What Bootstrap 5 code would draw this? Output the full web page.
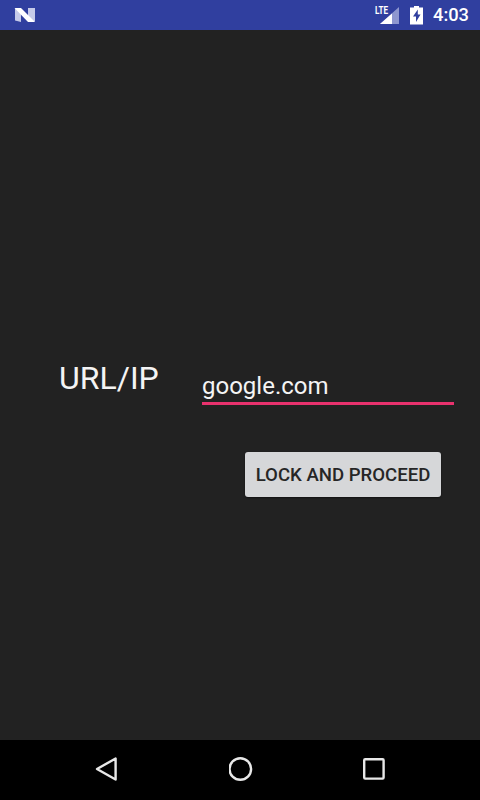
<!DOCTYPE html>
<html><head><meta charset="utf-8">
<link href="https://cdn.jsdelivr.net/npm/bootstrap@5.3.0/dist/css/bootstrap.min.css" rel="stylesheet">
<style>
html,body{height:800px;margin:0;overflow:hidden;background:#222;font-family:Roboto,sans-serif}
.shell{height:800px}
.statusbar{height:30px;background:#303f9f;color:#fff;padding:0 11px 0 14px}
.clock{font-size:18.3px;font-weight:500;line-height:30px;margin-left:10px}
.batt{margin-left:10px}
.content{height:710px;background:#222;padding-top:335px}
.formrow{height:80px}
.urlbl{font-size:32px;font-weight:400;line-height:36px;color:#f4f4f4;margin-left:59px;width:143px;margin-top:-5px}
.fieldwrap{width:252px;height:42px;margin-top:1px}
.fieldtxt{font-size:24px;line-height:30px;color:#f4f4f4;display:block;height:36px;padding-top:5px}
.fieldline{height:3px;background:#e9326e}
.actrow{padding-left:245px;margin-top:-4px;padding-top:11px}
.lockbtn{width:196px;height:45px;padding:1px 0 0;background:#d6d7d9;border:0;border-radius:3px;color:#262626;font-size:18.6px;font-weight:500;line-height:44px;white-space:nowrap;box-shadow:0 1px 2px rgba(0,0,0,.5)}
.navbottom{height:60px;background:#000;padding:0 95px 2px 94px}
</style></head>
<body>
<div class="shell d-flex flex-column">
 <div class="statusbar d-flex align-items-center">
  <svg width="21" height="16" viewBox="0 0 21 16"><path d="M1 1.5 L7 3 V15 L1 13.5Z" fill="#c5cae9"/><path d="M21 14.5 L14 13 V1 L21 1Z" fill="#c5cae9"/><path d="M0.5 1 H7 L21 15 H14Z" fill="#fff"/></svg>
  <div class="ms-auto d-flex align-items-center">
   <svg width="26" height="24" viewBox="0 0 26 24"><text x="1" y="11" font-family="Roboto" font-size="10" font-weight="700" fill="#fff" textLength="13" lengthAdjust="spacingAndGlyphs">LTE</text><path d="M25 4 V21 H6Z" fill="#8e97cf"/><path d="M18 10.6 V21 H6Z" fill="#fff"/></svg>
   <svg class="batt" width="13" height="20" viewBox="0 0 13 20"><path fill-rule="evenodd" d="M4 1 H9 V2.5 H13 V19.5 H0 V2.5 H4Z M7.8 4.5 L3 11.5 H6 V17 L10.5 9.5 H7.8Z" fill="#fff"/></svg>
   <span class="clock">4:03</span>
  </div>
 </div>
 <div class="content">
  <div class="formrow d-flex align-items-start">
   <div class="urlbl">URL/IP</div>
   <div class="fieldwrap"><span class="fieldtxt">google.com</span><div class="fieldline"></div></div>
  </div>
  <div class="actrow"><button class="btn lockbtn" type="button">LOCK AND PROCEED</button></div>
 </div>
 <div class="navbottom d-flex align-items-center justify-content-between">
  <svg width="24" height="26" viewBox="0 0 24 26"><path d="M3 13 L21.6 2.5 V23.5Z" fill="none" stroke="#e8e8e8" stroke-width="2.4" stroke-linejoin="round"/></svg>
  <svg width="24" height="24" viewBox="0 0 24 24"><circle cx="11.3" cy="12" r="10.8" fill="none" stroke="#e8e8e8" stroke-width="2.4"/></svg>
  <svg width="22" height="22" viewBox="0 0 22 22"><rect x="1.2" y="1.2" width="19.4" height="19.4" rx="1" fill="none" stroke="#e8e8e8" stroke-width="2.4"/></svg>
 </div>
</div>
<script src="https://cdn.jsdelivr.net/npm/bootstrap@5.3.0/dist/js/bootstrap.bundle.min.js"></script>
</body></html>
